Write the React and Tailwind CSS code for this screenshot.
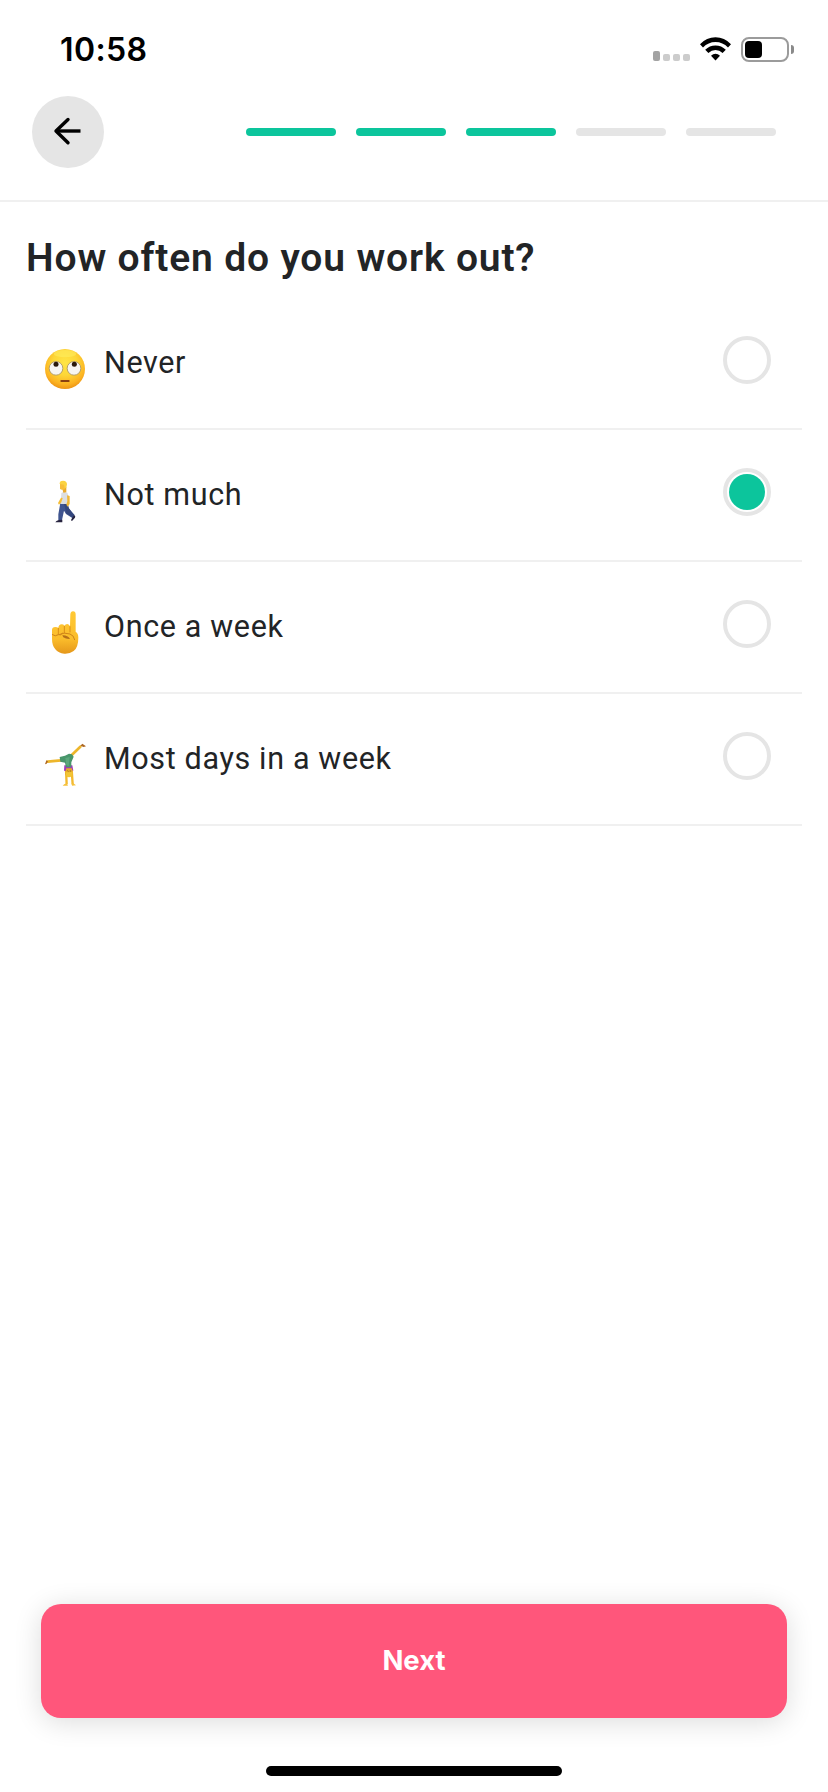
import { useState } from 'react'

const TOTAL_STEPS = 5
const CURRENT_STEP = 3

function RollingEyes() {
  return (
    <svg className="size-[70px]" viewBox="0 -3 210 210">
      <defs>
        <radialGradient id="face" cx="0.5" cy="0.35" r="0.68">
          <stop offset="0" stopColor="#ffe544" />
          <stop offset="0.45" stopColor="#fdd637" />
          <stop offset="0.78" stopColor="#fcb322" />
          <stop offset="1" stopColor="#e98c11" />
        </radialGradient>
      </defs>
      <circle cx="105" cy="102" r="60" fill="url(#face)" />
      <ellipse cx="105" cy="56" rx="34" ry="11" fill="#fff36b" opacity="0.45" />
      <circle cx="78" cy="100" r="20.5" fill="#f7f5f1" stroke="#a8925c" strokeWidth="2.5" />
      <circle cx="132" cy="100" r="20.5" fill="#f7f5f1" stroke="#a8925c" strokeWidth="2.5" />
      <circle cx="78" cy="88" r="7.5" fill="#2b1a0d" />
      <circle cx="133" cy="88" r="7.5" fill="#2b1a0d" />
      <rect x="91" y="135" width="28" height="6" rx="3" fill="#8b3f10" />
    </svg>
  )
}

function Walking() {
  return (
    <svg className="size-[70px]" viewBox="0 3 210 210">
      {/* legs */}
      <path d="M91 114 L112 114 L115 130 L134 150 L128 160 L108 147 L102 137 L96 165 L85 165 L85 148 Z" fill="#3f548f" />
      <path d="M102 116 L113 116 L117 130 L132 150 L127 157 L109 145 Z" fill="#34477d" />
      <path d="M76 172 Q78 167 86 165 L97 164 L97 172 Z" fill="#26233f" />
      <path d="M126 160 L132 150 Q138 153 135 158 L126 168 Q121 167 126 160 Z" fill="#26233f" />
      {/* shirt and arms */}
      <path d="M94 84 Q103 78 112 83 L117 96 L115 117 L91 117 L93 100 Z" fill="#dcdee1" />
      <path d="M111 91 L119 93 L119 117 L113 125 L109 119 L112 108 Z" fill="#f0b736" />
      <path d="M93 98 L98 99 L94 112 L87 119 L84 114 Z" fill="#f5bd35" />
      {/* head */}
      <path d="M96 67 L109 66 L109 82 L100 83 Z" fill="#e9a92c" />
      <path d="M90 54 H107 V70 Q102 76 95 74 L90 72 Z" fill="#f7be39" />
      <path d="M89 57 Q88 47 99 47 Q111 48 111 58 L109 68 L104 69 L102 59 Z" fill="#fbd341" />
    </svg>
  )
}

function PointUp() {
  return (
    <svg className="size-[70px]" viewBox="0 3 210 210">
      <defs>
        <linearGradient id="hand" x1="0" y1="0" x2="0" y2="1">
          <stop offset="0" stopColor="#ffc935" />
          <stop offset="0.65" stopColor="#fbbd2b" />
          <stop offset="1" stopColor="#e5971b" />
        </linearGradient>
      </defs>
      <path
        d="M121 52 Q122 43 129 43 Q137 43 137 52 L137 104 Q145 108 145 122 Q145 151 131 162 Q119 171 103 170 Q85 169 76 157 Q66 145 66 125 V99 Q66 90 76 90 Q82 90 85 93 Q86 82 95 82 Q101 82 103 86 Q106 81 112 81 Q118 82 120 88 Z"
        fill="url(#hand)"
      />
      <path d="M85 94 V112 M103 88 V108 M120 89 V105" fill="none" stroke="#d98d18" strokeWidth="3" strokeLinecap="round" />
      <path d="M67 113 Q76 120 85 113 Q93 116 97 109 M89 112 Q102 105 120 111 Q132 115 134 128" fill="none" stroke="#cf8418" strokeWidth="3" strokeLinecap="round" />
      <path d="M97 115 Q113 114 120 126 Q109 127 100 121 Z" fill="#b57018" />
    </svg>
  )
}

function Cartwheel() {
  return (
    <svg className="size-[70px]" viewBox="0 0 210 210">
      {/* legs */}
      <path d="M93 91 L53 95 M123 77 L151 50" fill="none" stroke="#edb62b" strokeWidth="8" strokeLinecap="round" />
      <path d="M45 103 L49 91 L54 94 L50 101 Z M151 47 L157 41 L168 49 L161 51 Z" fill="#ad6723" />
      {/* arms */}
      <path d="M108 119 L110 163 M125 119 L128 163" fill="none" stroke="#f3b92e" strokeWidth="7" />
      <path d="M98 167 Q101 162 110 160 L114 167 Z M125 160 L130 160 L138 166 L126 167 Z" fill="#f6c13b" />
      {/* shirt */}
      <path d="M103 106 L127 106 L130 122 L121 119 L112 124 L102 122 Z" fill="#a33aba" />
      <path d="M89 81 L105 77 L117 71 L126 73 L131 80 L124 97 L124 112 L108 112 L105 98 L91 95 Z" fill="#48966b" />
      <path d="M106 84 L119 81 L116 109 L109 105 Z" fill="#5ba87c" />
      {/* head */}
      <path d="M109 115 H126 L127 132 Q120 142 109 139 L105 131 Z" fill="#e4aa2b" />
      <path d="M107 127 L127 126 Q128 142 117 142 Q106 142 107 127 Z" fill="#f2c535" />
      <path d="M111 121 L116 125 M121 120 L121 126" stroke="#a66c1a" strokeWidth="2" />
    </svg>
  )
}

const options = [
  { id: 'never', label: 'Never', Icon: RollingEyes },
  { id: 'not_much', label: 'Not much', Icon: Walking },
  { id: 'once', label: 'Once a week', Icon: PointUp },
  { id: 'most_days', label: 'Most days in a week', Icon: Cartwheel },
]

function StatusBar() {
  return (
    <div className="flex h-24 items-start justify-between pt-[31px] pr-[34px] pl-[60px]">
      <span className="text-[32px] leading-[38px] font-semibold tracking-[0.4px] text-black">10:58</span>
      <div className="flex h-[38px] items-start pt-1.5">
        <div className="mr-2.5 flex h-[24px] items-end gap-[3px]">
          <span className="h-[10px] w-[7px] rounded-[2px] bg-[#a3a3a3]" />
          <span className="size-[7px] rounded-[2px] bg-[#cccccc]" />
          <span className="size-[7px] rounded-[2px] bg-[#cccccc]" />
          <span className="size-[7px] rounded-[2px] bg-[#cccccc]" />
        </div>
        <svg className="mr-2.5 h-[24px] w-[31px]" viewBox="0 0 31 24">
          <path d="M0 7.2 Q6.5 0.2 15.5 0.2 Q24.5 0.2 31 7.2 L28 10.5 Q22.8 5 15.5 5 Q8.2 5 3 10.5 Z" />
          <path d="M5.2 12.7 Q9.5 8.4 15.5 8.4 Q21.5 8.4 25.8 12.7 L22.6 16 Q19.5 13 15.5 13 Q11.5 13 8.4 16 Z" />
          <path d="M11 18.7 Q13 16.8 15.5 16.8 Q18 16.8 20 18.7 L15.5 23.6 Z" />
        </svg>
        <div className="flex items-center">
          <div className="h-[25px] w-12 rounded-[8px] border-2 border-[#9b9b9b] p-[2px]">
            <div className="h-[17px] w-[17px] rounded-[4px] bg-black" />
          </div>
          <span className="ml-[2px] h-[9px] w-[3px] rounded-r-full bg-[#8a8a8a]" />
        </div>
      </div>
    </div>
  )
}

function App() {
  const [selected, setSelected] = useState('not_much')

  return (
    <div className="flex h-[1792px] w-[828px] flex-col bg-white font-['Inter',sans-serif] text-[#222426]">
      <StatusBar />

      <header className="flex h-[106px] items-start justify-between border-b-2 border-[#f0f0f0] pr-[52px] pl-8">
        <button aria-label="Back" className="flex size-[72px] items-center justify-center rounded-full bg-[#e5e5e5]">
          <svg className="size-[72px]" viewBox="0 0 72 72" fill="none" stroke="#000" strokeWidth="3.4">
            <path d="M36 23.5 L24 35 L36 46.8" strokeLinecap="round" strokeLinejoin="round" />
            <path d="M24 35 H48.5" />
          </svg>
        </button>
        <div className="flex h-[72px] items-center gap-5">
          {Array.from({ length: TOTAL_STEPS }, (_, i) => (
            <span
              key={i}
              className={`h-2 w-[90px] rounded-full ${i < CURRENT_STEP ? 'bg-[#0cc59c]' : 'bg-[#e5e5e5]'}`}
            />
          ))}
        </div>
      </header>

      <main className="flex-1 px-[26px] font-['Roboto',sans-serif]">
        <h1 className="h-24 pt-[33px] text-[39px] leading-[46px] font-semibold tracking-[0.85px] whitespace-nowrap">
          How often do you work out?
        </h1>

        {options.map(({ id, label, Icon }) => (
          <button
            key={id}
            onClick={() => setSelected(id)}
            className="flex h-[132px] w-full items-start border-b-2 border-[#f0f0f0] pr-[31px] pl-1 text-left"
          >
            <span className="mt-9">
              <Icon />
            </span>
            <span className="mt-[47px] ml-1 flex-1 text-[30.5px] leading-9 tracking-[0.65px]">{label}</span>
            <span className="mt-[38px] flex size-12 items-center justify-center rounded-full border-4 border-[#e5e5e5]">
              {selected === id && <span className="size-9 rounded-full bg-[#0cc59c]" />}
            </span>
          </button>
        ))}
      </main>

      <footer className="flex flex-col items-center px-[41px] pb-4">
        <button className="h-[114px] w-full rounded-[20px] bg-[#ff567b] text-[27.5px] font-bold text-white shadow-[0_4px_28px_rgba(0,0,0,0.14)]">
          Next
        </button>
        <div className="mt-12 h-[10px] w-[296px] rounded-full bg-black" />
      </footer>
    </div>
  )
}

export default App
